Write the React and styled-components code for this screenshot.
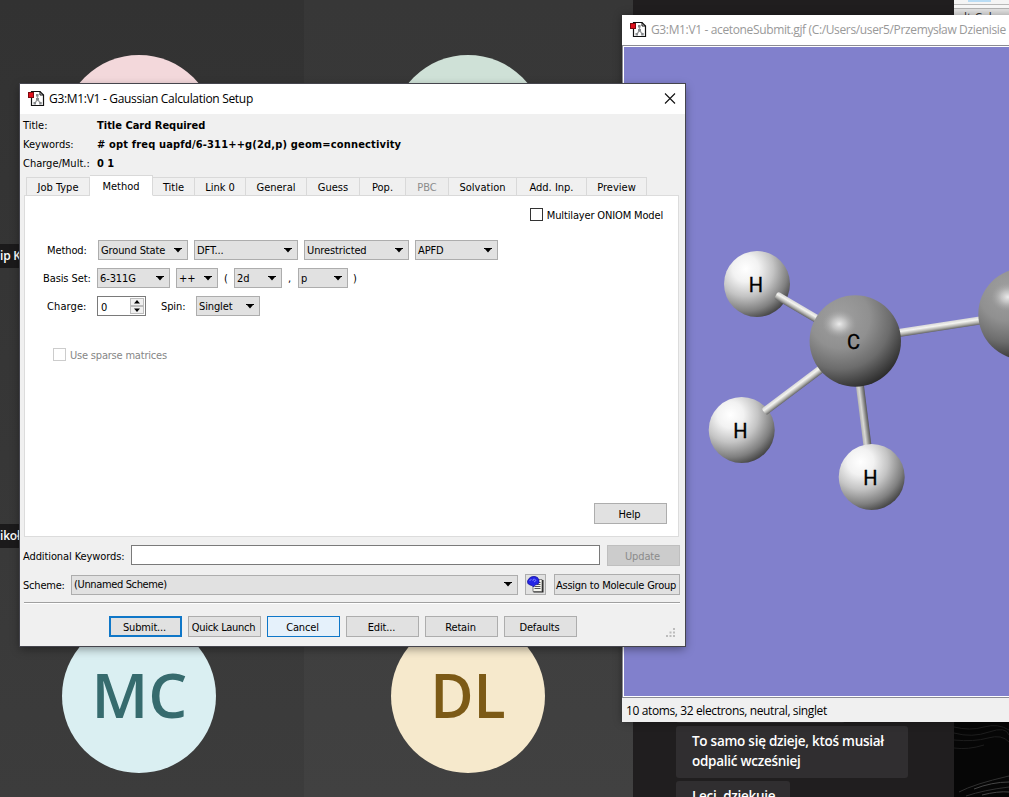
import React from "react";
import styled, { createGlobalStyle } from "styled-components";

const Global = createGlobalStyle`
  *{box-sizing:border-box}
  body{margin:0;overflow:hidden;background:#3b3b3b}
`;
const ui = `"DejaVu Sans Condensed","DejaVu Sans",sans-serif`;
const segoe = `"Open Sans","Noto Sans",sans-serif`;

/* ---------- desktop ---------- */
const Desktop = styled.div`position:relative;width:1009px;height:797px;overflow:hidden;display:flex;font:11px ${ui};color:#000`;
const Stage = styled.div`display:grid;grid-template-columns:304px 329px;grid-template-rows:268px 280px 249px;width:633px`;
const Tile = styled.div`
  background:linear-gradient(${p => p.$from},${p => p.$to});
  display:flex;position:relative;
  padding:${p => p.$pad};
`;
const Avatar = styled.div`
  width:154px;height:154px;border-radius:50%;background:${p => p.$bg};color:${p => p.$fg};
  display:flex;align-items:center;justify-content:center;flex:none;
  font:550 61px/1 ${segoe};
  span{transform:scaleX(${p => p.$sx || 1});margin-top:-3px}
`;
const NameTag = styled.div`
  position:absolute;left:0;bottom:0;height:24px;width:80px;background:#1b1a1b;color:#fff;
  font:550 12px/24px ${segoe};letter-spacing:-.2px;white-space:nowrap;
`;
const Chat = styled.div`width:321px;background:#201e1f;padding:671px 0 0 43px;display:flex;flex-direction:column;gap:3px;overflow:hidden;align-items:flex-start`;
const Bubble = styled.div`
  background:#302e30;border-radius:3px;color:#fff;width:${p => p.$w}px;height:52px;flex:none;padding:5px 16px 7px;
  font:550 13.5px/20px ${segoe};white-space:nowrap;letter-spacing:-.26px;
`;
const Strip = styled.div`width:55px;background:#060606;display:flex;flex-direction:column;justify-content:space-between;overflow:hidden`;
const StripTop = styled.div`
  height:16px;font:12px/12px ${segoe};color:#333;overflow:hidden;
  background:linear-gradient(#f4f4f4 4px,#b9b9b9 4px 5px,#f7f7f7 5px 8px,#b5b5b5 8px 9px,#e4e4e4 9px);
  padding:0 0 0 10px;white-space:nowrap;
`;
const Highlight = styled.div`height:2px;width:23px;margin:0 0 10px 4px;background:#b9dcf4`;

/* ---------- windows ---------- */
const ViewerWindow = styled.section`
  position:absolute;left:622px;top:15px;width:400px;height:707px;background:#f0f0f0;display:flex;flex-direction:column;
  box-shadow:0 0 8px rgba(0,0,0,.35);
`;
const TitleBar = styled.header`
  height:30px;background:#fff;display:flex;align-items:center;padding:0 9px 0 8px;gap:4px;flex:none;
  font:12px/16px ${segoe};color:${p => p.$c};white-space:nowrap;
  span{letter-spacing:${p => p.$ls};flex:1;min-width:0}
  svg{flex:none}
  svg:first-child{margin-top:-1px}
`;
const Viewport = styled.div`height:651px;border:solid #fff;border-width:1px 0 1px 1px;outline:1px solid #8b8b93;margin:1px 0 1px 1px;background:#8180cc;flex:none;display:flex`;
const Status = styled.footer`flex:1;padding:1px 4px;font:12px/24px ${segoe};letter-spacing:-.38px;white-space:nowrap`;

const Dialog = styled.section`
  position:absolute;left:20px;top:84px;width:665px;height:562px;background:#f0f0f0;display:flex;flex-direction:column;
  outline:1px solid #45454d;box-shadow:0 3px 9px rgba(0,0,0,.4);
`;
const Info = styled.div`padding:2px 3px 0;height:61px;flex:none`;
const InfoRow = styled.div`display:flex;height:19px;align-items:center;white-space:nowrap;
  span{width:74px}
  b{letter-spacing:${p => p.$ls || "0"}}
`;
const Tabs = styled.nav`height:21px;display:flex;align-items:flex-end;padding-left:6px;flex:none;position:relative;z-index:1`;
const Tab = styled.div`
  width:${p => p.$w}px;height:${p => (p.$on ? 21 : 19)}px;background:${p => (p.$on ? "#fff" : p.$off ? "#ededed" : "#f0f0f0")};
  border:1px solid #d9d9d9;border-left-width:${p => (p.$first ? 1 : 0)}px;
  border-bottom-color:${p => (p.$on ? "#fff" : "#d9d9d9")};
  color:${p => (p.$off ? "#8b8b8b" : "#000")};
  display:flex;align-items:center;justify-content:center;letter-spacing:0;white-space:nowrap;padding:2px 0 0 0;
`;
const Pane = styled.div`
  margin:-1px 6px 0 4px;height:342px;border:1px solid #dcdcdc;background:#fff;flex:none;
  display:flex;flex-direction:column;align-items:flex-start;padding:12px 11px 0 22px;
`;
const Check = styled.label`
  display:flex;align-items:center;gap:4px;height:13px;white-space:nowrap;letter-spacing:${p => p.$ls};
  color:${p => (p.$off ? "#868686" : "#000")};align-self:${p => (p.$end ? "flex-end" : "flex-start")};
  margin:${p => p.$m || 0};
  i{width:13px;height:13px;border:1px solid ${p => (p.$off ? "#ccc" : "#333")};background:#fff}
  span{padding-top:2px}
`;
const Row = styled.div`display:flex;align-items:center;height:${p => p.$h || 20}px;margin-top:${p => p.$mt}px;margin-left:${p => p.$ml || 0}px;flex:none;white-space:nowrap`;
const Label = styled.span`width:${p => p.$w}px;letter-spacing:${p => p.$ls || "-.1px"};flex:none;padding-top:${p => p.$pt || 0}px`;
const ComboBox = styled.div`
  width:${p => p.$w}px;height:20px;border:1px solid #adadad;background:#e1e1e1;display:flex;align-items:center;justify-content:space-between;
  padding:0 5px 0 2px;margin-right:${p => p.$mr ?? 6}px;letter-spacing:${p => p.$ls || "-.12px"};flex:none;white-space:nowrap;
`;
const Spinner = styled.div`
  width:49px;height:20px;border:1px solid #7a7a7a;display:flex;align-items:center;justify-content:space-between;padding:0 1px 0 3px;flex:none;background:#fff;margin-right:15px;
  span{padding-top:2px}
`;
const SpinButtons = styled.div`display:grid;grid-template-rows:8px 8px;width:14px;
  div{border:1px solid #bdbdbd;background:#f0f0f0;display:flex;align-items:center;justify-content:center}
`;
const Button = styled.button`
  width:${p => p.$w || 73}px;height:21px;padding:${p => (p.$icon ? 0 : "2px 2px 0 0")};margin-left:${p => p.$ml || 0}px;flex:none;font:11px ${ui};letter-spacing:${p => p.$ls || "-.15px"};color:${p => (p.$off ? "#8b8b8b" : "#000")};
  background:${p => (p.$off ? "#ccc" : p.$hot ? "#e5f1fb" : "#e1e1e1")};white-space:nowrap;
  border:${p => (p.$def ? 2 : 1)}px solid ${p => (p.$def || p.$hot ? "#0f77c8" : p.$off ? "#bfbfbf" : "#adadad")};
  display:flex;align-items:center;justify-content:center;
`;
const HelpRow = styled.div`margin-top:auto;margin-bottom:12px;align-self:flex-end`;
const Input = styled.div`width:469px;height:20px;background:#fff;border:1px solid #7a7a7a;margin-right:7px;align-self:flex-start`;
const Divider = styled.div`height:2px;margin:7px 5px 0 4px;background:linear-gradient(#a0a0a0 1px,#fff 1px);flex:none`;
const Actions = styled.div`display:flex;gap:6px;padding:12px 10px 0 89px;align-items:flex-start;flex:none`;
const Grip = styled.svg`margin:12px 0 0 auto;display:block`;

const Caret = () => (
  <svg width="8" height="5" viewBox="0 0 8 5"><path d="M0 0H8V1H7L4 4.6L1 1H0Z" fill="#000" /></svg>
);
const Combo = ({ w, mr, ls, children }) => (
  <ComboBox $w={w} $mr={mr} $ls={ls}><span>{children}</span><Caret /></ComboBox>
);
const AppIcon = () => (
  <svg width="17" height="17" viewBox="0 0 17 17">
    <path d="M3.5 1.500H12L15.500 5V15.500H3.500Z" fill="#fff" stroke="#111" strokeWidth="1.2" />
    <path d="M12 1.5V5H15.5" fill="none" stroke="#111" />
    <path d="M9.500 5V9.500L7 13M9.500 9.500L12.500 13" fill="none" stroke="#a4a4a4" strokeWidth="1.3" />
    <path d="M8 4H10.5V6.5H8ZM8 8H11V10.5H8ZM5.500 12H8V14.5H5.500ZM11.2 12H13.7V14.5H11.2Z" fill="#85898c" />
    <rect x=".5" y="2.5" width="5" height="5" fill="#e0101c" stroke="#7c0a10" />
  </svg>
);
const SchemeIcon = () => (
  <svg width="17" height="17" viewBox="0 0 17 17">
    <path d="M6.5 4H16.500V16.500H6.5Z" fill="#222" />
    <path d="M6 3.500H15V15.500H6Z" fill="#f4f4ee" stroke="#555" strokeWidth=".7" />
    <path d="M10 6.500H13.5M10 8.500H13.5M7.500 10.500H13.5M7.500 12.500H13.5" stroke="#444" strokeWidth=".9" />
    <path d="M4 1L6 .5L8 .5L10.500 1.500L12 4L12 7L10 8.500L8 9L6.500 11L5 9.500L3 9L.8 7.500L.5 5L2 2.500Z" fill="#2424e4" stroke="#0a0a98" strokeWidth=".7" />
    <path d="M2.500 5L4.500 3M6 5V3.500L7.500 3L9 4.500L7 6" stroke="#9297ff" strokeWidth=".8" fill="none" />
  </svg>
);
const CloseIcon = () => (
  <svg width="12" height="12" viewBox="0 0 12 12"><path d="M1 .5L11 10.500M11 .5L1 10.500" stroke="#111" strokeWidth="1.1" /></svg>
);

/* ---------- molecule ---------- */
const bonds = [
  { x1: 776, y1: 295, x2: 822, y2: 322 },
  { x1: 764, y1: 412, x2: 825, y2: 366 },
  { x1: 859, y1: 378, x2: 868, y2: 450 },
  { x1: 892, y1: 334, x2: 990, y2: 319 },
];
const Bond = ({ b }) => {
  const len = Math.hypot(b.x2 - b.x1, b.y2 - b.y1);
  const a = (Math.atan2(b.y2 - b.y1, b.x2 - b.x1) * 180) / Math.PI;
  return <rect width={len} height="8" y="-4" rx="2" transform={`translate(${b.x1} ${b.y1}) rotate(${a})`} fill={a > 60 ? "url(#rodV)" : "url(#rod)"} />;
};
const Atom = ({ x, y, r, kind, lx, ly }) => (
  <g>
    <circle cx={x} cy={y} r={r} fill={`url(#${kind})`} />
    {kind === "C" && <ellipse cx={x - 16} cy={y - 17} rx="17" ry="14" fill="url(#shine)" />}
    {lx && <text x={lx} y={ly} textAnchor="middle" fontFamily="Roboto, sans-serif" fontSize="20" stroke="#000" strokeWidth=".3">{kind}</text>}
  </g>
);
const Molecule = () => (
  <svg width="385" height="649" viewBox="624 47 385 649">
    <defs>
      <radialGradient id="H" cx=".33" cy=".27" r=".8">
        <stop offset="0" stopColor="#fff" /><stop offset=".25" stopColor="#f2f2f2" /><stop offset=".52" stopColor="#c4c4c4" />
        <stop offset=".8" stopColor="#808080" /><stop offset="1" stopColor="#3c3c3c" />
      </radialGradient>
      <radialGradient id="C" cx=".33" cy=".25" r=".82">
        <stop offset="0" stopColor="#a0a0a0" /><stop offset=".4" stopColor="#909090" /><stop offset=".68" stopColor="#6c6c6c" /><stop offset="1" stopColor="#262626" />
      </radialGradient>
      <radialGradient id="shine">
        <stop offset="0" stopColor="#ececec" /><stop offset=".4" stopColor="#d4d4d4" stopOpacity=".7" /><stop offset="1" stopColor="#a5a5a5" stopOpacity="0" />
      </radialGradient>
      <linearGradient id="rod" x1="0" y1="0" x2="0" y2="1">
        <stop offset="0" stopColor="#d8d8d8" /><stop offset=".35" stopColor="#f4f4f0" /><stop offset=".7" stopColor="#b2b2ae" /><stop offset="1" stopColor="#666" />
      </linearGradient>
      <linearGradient id="rodV" x1="0" y1="1" x2="0" y2="0">
        <stop offset="0" stopColor="#b5b5b3" /><stop offset=".35" stopColor="#d8d8d5" /><stop offset=".7" stopColor="#8f8f8e" /><stop offset="1" stopColor="#555" />
      </linearGradient>
    </defs>
    <Atom x={757} y={284} r={33} kind="H" lx={756} ly={292} />
    <Atom x={741.7} y={430} r={33} kind="H" lx={740.5} ly={438} />
    {bonds.map(b => <Bond key={b.x1} b={b} />)}
    <Atom x={871.7} y={477} r={33} kind="H" lx={870.5} ly={485} />
    <Atom x={855.3} y={341} r={45.7} kind="C" lx={853.5} ly={349} />
    <Atom x={1024} y={314} r={45.7} kind="C" />
  </svg>
);
const Wallpaper = () => (
  <svg width="55" height="75" viewBox="0 0 55 75">
    <rect width="55" height="75" fill="#060606" />
    <g fill="none" stroke="#1d1d1d">
      <path d="M0 5Q16 9 30 5T55 8M0 11Q18 16 35 10T55 13M0 18Q20 20 34 16T55 20M0 26Q14 28 30 23" />
      <path d="M5 70Q20 62 55 54M12 74Q30 68 55 65" stroke="#303030" />
      <path d="M20 67Q38 60 55 60M28 73Q44 69 55 70" stroke="#464646" />
    </g>
  </svg>
);

const tabs = [
  ["Job Type", 64, { $first: true }], ["Method", 63, { $on: true }], ["Title", 42], ["Link 0", 51], ["General", 61], ["Guess", 53],
  ["Pop.", 46], ["PBC", 43, { $off: true }], ["Solvation", 68], ["Add. Inp.", 70], ["Preview", 60],
];

export default function App() {
  return (
    <Desktop>
      <Global />
      <Stage>
        <Tile $from="#323232" $to="#353535" $pad="55px 0 0 62px"><Avatar $bg="#f3d8db" /><NameTag>ip K</NameTag></Tile>
        <Tile $from="#373737" $to="#393939" $pad="55px 0 0 87px"><Avatar $bg="#cfe1d7" /></Tile>
        <Tile $from="#353535" $to="#383838" $pad="0"><NameTag>ikoła</NameTag></Tile>
        <Tile $from="#393939" $to="#3d3d3d" $pad="0" />
        <Tile $from="#393939" $to="#3c3c3c" $pad="71px 0 0 62px"><Avatar $bg="#daeff2" $fg="#366b6e" $sx={1.01}><span>MC</span></Avatar></Tile>
        <Tile $from="#3e3e3e" $to="#414141" $pad="71px 0 0 87px"><Avatar $bg="#f6e9cc" $fg="#7c5a16" $sx={0.97}><span>DL</span></Avatar></Tile>
      </Stage>
      <Chat>
        <Bubble $w={169} />
        <Bubble $w={232}>To samo się dzieje, ktoś musiał<br />odpalić wcześniej</Bubble>
        <Bubble $w={114}>Leci, dziękuję</Bubble>
      </Chat>
      <Strip><StripTop><Highlight />lt Calc</StripTop><Wallpaper /></Strip>

      <ViewerWindow>
        <TitleBar $c="#999" $ls="-.36px"><AppIcon /><span>G3:M1:V1 - acetoneSubmit.gjf (C:/Users/user5/Przemysław Dzienisie</span></TitleBar>
        <Viewport><Molecule /></Viewport>
        <Status>10 atoms, 32 electrons, neutral, singlet</Status>
      </ViewerWindow>

      <Dialog>
        <TitleBar $c="#000" $ls="-.31px"><AppIcon /><span>G3:M1:V1 - Gaussian Calculation Setup</span><CloseIcon /></TitleBar>
        <Info>
          <InfoRow><span>Title:</span><b>Title Card Required</b></InfoRow>
          <InfoRow $ls=".16px"><span>Keywords:</span><b># opt freq uapfd/6-311++g(2d,p) geom=connectivity</b></InfoRow>
          <InfoRow><span>Charge/Mult.:</span><b>0 1</b></InfoRow>
        </Info>
        <Tabs>{tabs.map(([t, w, o]) => <Tab key={t} $w={w} {...o}>{t}</Tab>)}</Tabs>
        <Pane>
          <Check $end $m="0 4px 0 0" $ls="-.15px"><i /><span>Multilayer ONIOM Model</span></Check>
          <Row $mt={19}>
            <Label $w={51}>Method:</Label>
            <Combo w={90}>Ground State</Combo><Combo w={104}>DFT...</Combo><Combo w={105}>Unrestricted</Combo><Combo w={83}>APFD</Combo>
          </Row>
          <Row $mt={8} $ml={-4}>
            <Label $w={54}>Basis Set:</Label>
            <Combo w={73}>6-311G</Combo><Combo w={42}>++</Combo><Label $w={10}>(</Label>
            <Combo w={48}>2d</Combo><Label $w={10}>,</Label><Combo w={50} mr={5}>p</Combo><Label $w={8}>)</Label>
          </Row>
          <Row $mt={8}>
            <Label $w={50} $ls=".1px">Charge:</Label>
            <Spinner><span>0</span><SpinButtons>
              <div><svg width="6" height="4" viewBox="0 0 6 4"><path d="M0 3.500L3 0L6 3.500Z" /></svg></div>
              <div><svg width="6" height="4" viewBox="0 0 6 4"><path d="M0 .5L3 4L6 .5Z" /></svg></div>
            </SpinButtons></Spinner>
            <Label $w={35}>Spin:</Label><Combo w={64}>Singlet</Combo>
          </Row>
          <Check $off $m="32px 0 0 6px" $ls="-.2px"><i /><span>Use sparse matrices</span></Check>
          <HelpRow><Button>Help</Button></HelpRow>
        </Pane>
        <Row $mt={8} $ml={3} $h={21}><Label $w={108} $pt={1}>Additional Keywords:</Label><Input /><Button $off>Update</Button></Row>
        <Row $mt={8} $ml={3} $h={21}>
          <Label $w={48} $pt={1} $ls="-.2px">Scheme:</Label><Combo w={447} mr={7} ls="-.36px">(Unnamed Scheme)</Combo>
          <Button $w={21} $icon><SchemeIcon /></Button><Button $w={126} $ml={8} $ls="-.24px">Assign to Molecule Group</Button>
        </Row>
        <Divider />
        <Actions>
          <Button $def>Submit...</Button><Button $ls="-.3px">Quick Launch</Button><Button $hot>Cancel</Button>
          <Button>Edit...</Button><Button>Retain</Button><Button>Defaults</Button>
          <Grip width="9" height="9" viewBox="0 0 9 9"><path d="M7 0h2v2H7zM7 3.500h2v2H7zM3.500 3.500h2v2h-2zM0 7h2v2H0zM3.500 7h2v2h-2zM7 7h2v2H7z" fill="#bcbcbc" /></Grip>
        </Actions>
      </Dialog>
    </Desktop>
  );
}
